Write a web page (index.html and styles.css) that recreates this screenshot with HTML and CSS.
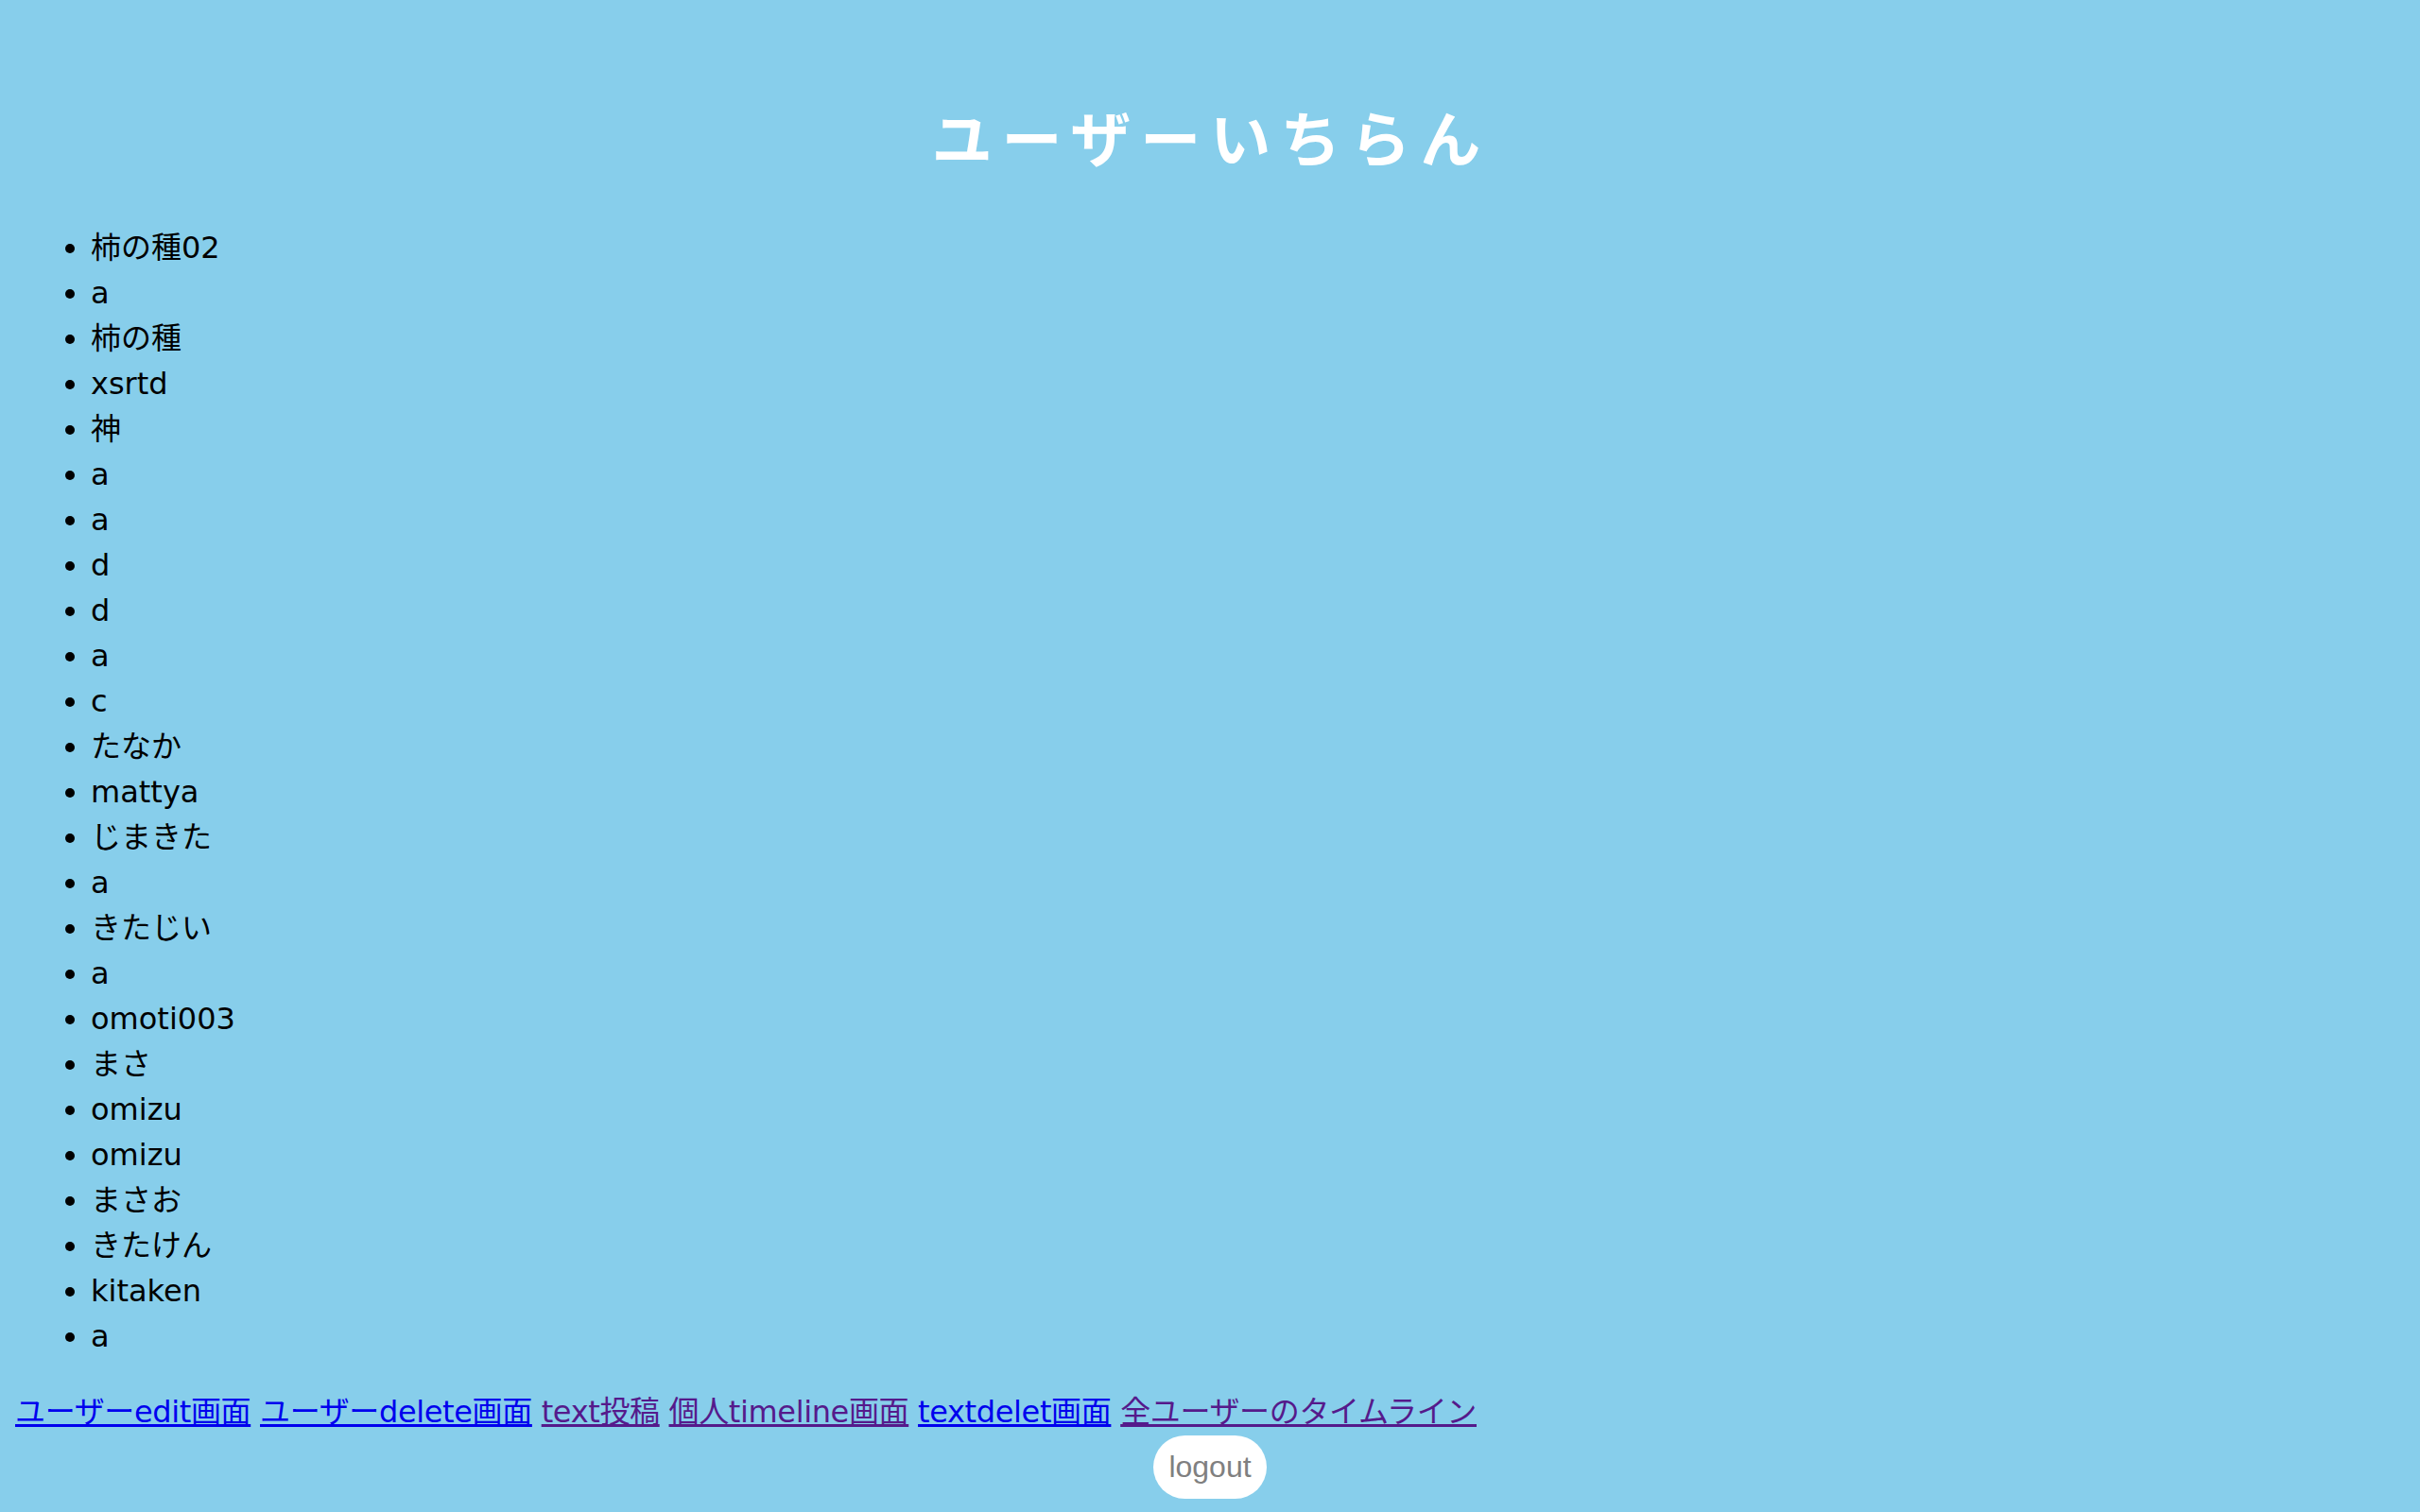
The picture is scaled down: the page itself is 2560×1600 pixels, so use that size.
FILE: index.html
```html
<!DOCTYPE html>
<html lang="ja">
<head>
<meta charset="utf-8">
<title>ユーザーいちらん</title>
<link rel="stylesheet" href="styles.css">
</head>
<body>
<h1 class="title">ユーザーいちらん</h1>
<ul class="users">
<li>柿の種02</li>
<li>a</li>
<li>柿の種</li>
<li>xsrtd</li>
<li>神</li>
<li>a</li>
<li>a</li>
<li>d</li>
<li>d</li>
<li>a</li>
<li>c</li>
<li>たなか</li>
<li>mattya</li>
<li>じまきた</li>
<li>a</li>
<li>きたじい</li>
<li>a</li>
<li>omoti003</li>
<li>まさ</li>
<li>omizu</li>
<li>omizu</li>
<li>まさお</li>
<li>きたけん</li>
<li>kitaken</li>
<li>a</li>
</ul>
<div class="links">
<a class="link" href="#">ユーザーedit画面</a> <a class="link" href="#">ユーザーdelete画面</a> <a class="link visited" href="#">text投稿</a> <a class="link visited" href="#">個人timeline画面</a> <a class="link" href="#">textdelet画面</a> <a class="link visited" href="#">全ユーザーのタイムライン</a>
</div>
<div class="logout-row">
<button class="logout" type="button">logout</button>
</div>
</body>
</html>
```
FILE: styles.css
```css
html {
  background: #87ceeb;
}
body {
  margin: 0 16px;
  padding: 0;
  background: #87ceeb;
  color: #000;
  font-family: "DejaVu Sans", "Noto Sans CJK JP", sans-serif;
  font-size: 32px;
  line-height: 48px;
}
.title {
  margin: 95px 0 47px;
  text-align: center;
  color: #fff;
  font-family: "Noto Sans CJK JP", sans-serif;
  font-size: 64px;
  line-height: 96px;
  font-weight: bold;
  letter-spacing: 10px;
  text-indent: 2px;
}
.users {
  margin: 0 0 32px;
  padding-left: 80px;
}
.users li {
  line-height: 48px;
}
.links {
  line-height: 48px;
  letter-spacing: -0.36px;
}
.link {
  color: #0000ee;
  text-decoration: underline;
}
.link.visited {
  color: #551a8b;
}
.logout-row {
  display: flex;
  justify-content: center;
  padding-top: 1px;
}
.logout {
  width: 120px;
  height: 67px;
  border: none;
  border-radius: 34px;
  background: #fff;
  color: #808080;
  font-family: "Liberation Sans", "Noto Sans CJK JP", sans-serif;
  font-size: 32px;
  padding: 0;
}
```
